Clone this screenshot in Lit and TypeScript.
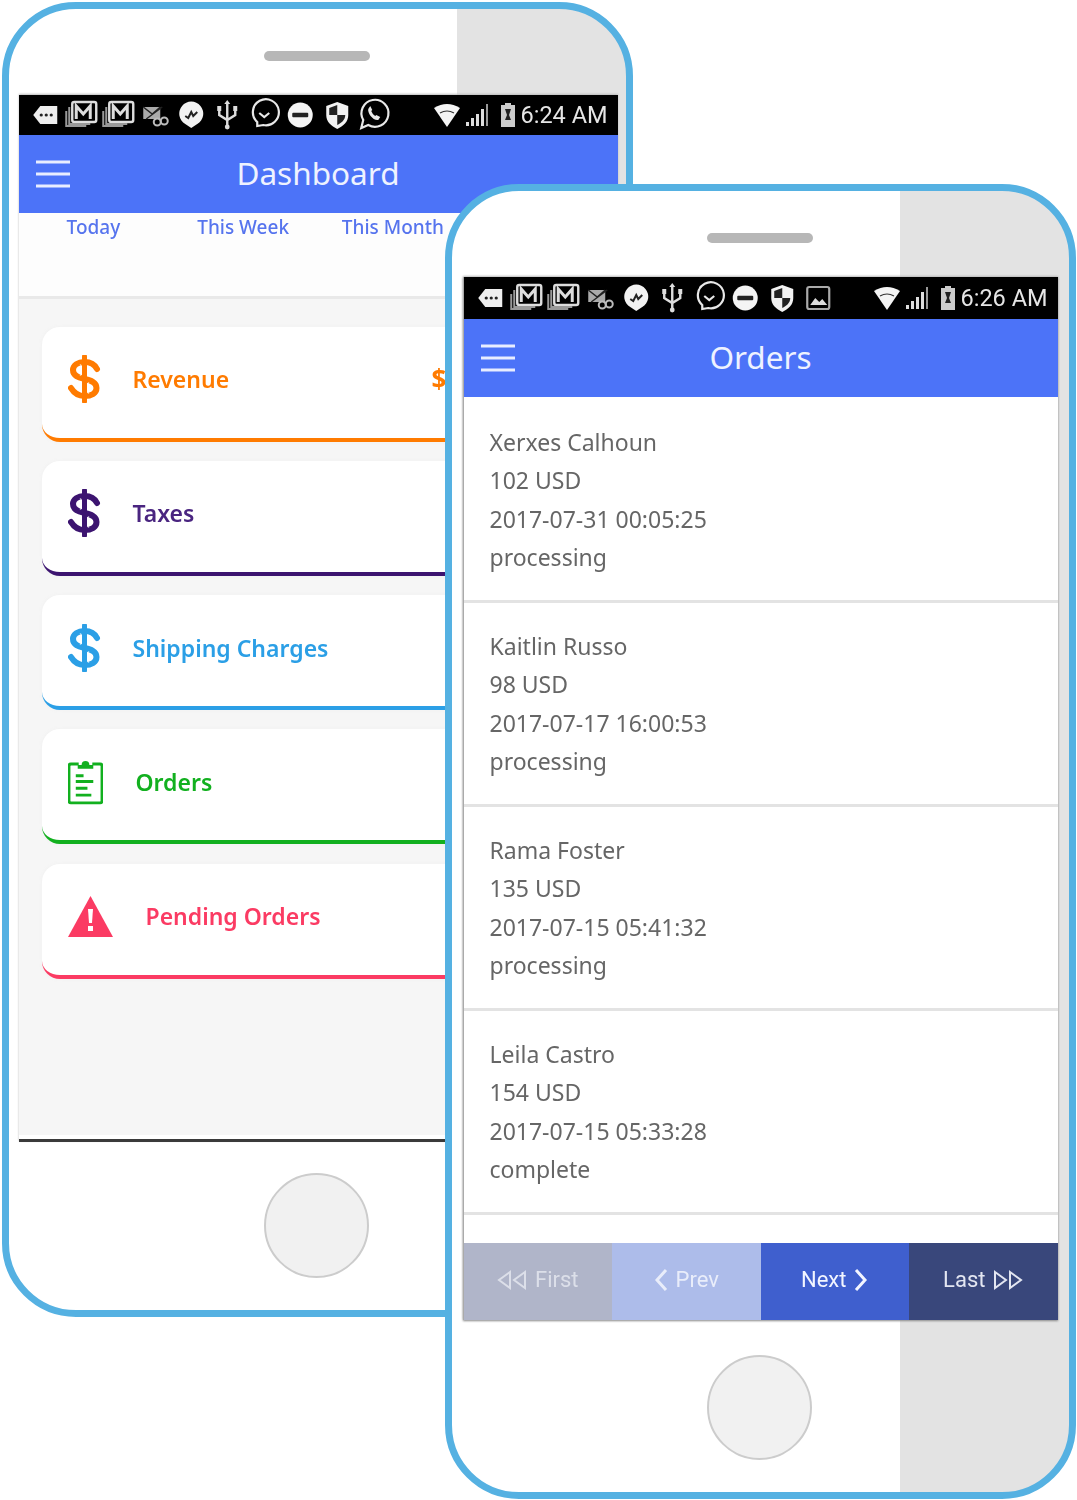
import { LitElement, html, css, svg } from 'lit';
import { customElement } from 'lit/decorators.js';

const statusIcons: Record<string, unknown> = {
  tag: svg`<path d="M6 20l7-9h17v18H13z" fill="#eee"/><circle cx="14" cy="20" r="1.6" fill="#222"/><circle cx="19" cy="20" r="1.6" fill="#222"/><circle cx="24" cy="20" r="1.6" fill="#222"/>`,
  mail: svg`<g fill="none" stroke="#ddd"><rect x="9" y="7" width="24" height="20" rx="2" stroke-width="2.4"/><path d="M13 24V11l7 8 7-8v13" stroke-width="3"/><path d="M6 12v17h21M3 16v15h20" stroke="#999" stroke-width="2"/></g>`,
  cut: svg`<path d="M7 12h17v12H7z" fill="#aaa"/><path d="M7 12l9 7 8-7M10 24l16-12" stroke="#222" stroke-width="1.4" fill="none"/><circle cx="21" cy="27" r="3.5" fill="none" stroke="#bbb" stroke-width="2"/><circle cx="28" cy="26" r="3.5" fill="none" stroke="#bbb" stroke-width="2"/>`,
  pin: svg`<path d="M18 33l-6-4a12 12 0 1 1 12 0z" fill="#f2f2f2"/><path d="M12 21l3 2 3-6 2 4 4-4" fill="none" stroke="#222" stroke-width="2"/>`,
  usb: svg`<path d="M18 7v26M10 15v5l8 5 8-5v-5" fill="none" stroke="#ddd" stroke-width="2.4"/><path d="M18 5l-3 4h6z" fill="#ddd"/><circle cx="18" cy="32" r="2.4" fill="#ddd"/><rect x="8" y="11" width="4" height="5" fill="#ddd"/><rect x="24" y="11" width="4" height="5" fill="#ddd"/>`,
  chat: svg`<path d="M11 31v-4a13 13 0 1 1 6 3z" fill="none" stroke="#e8e8e8" stroke-width="2.2"/><path d="M13 18l5 4 5-4" fill="none" stroke="#e8e8e8" stroke-width="2.2"/>`,
  minus: svg`<circle cx="18" cy="20" r="12.5" fill="#f4f4f4"/><rect x="10" y="17.8" width="16" height="4.4" rx="1" fill="#222"/>`,
  shield: svg`<path d="M18 7l11 4v9c0 7-5 11-11 14-6-3-11-7-11-14v-9z" fill="#f2f2f2"/><path d="M18 10v10h8c0 5-4 8-8 10V20h-8v-7z" fill="#222"/>`,
  whatsapp: svg`<path d="M6 33l2-8a13.500 13.500 0 1 1 5 5z" fill="none" stroke="#e8e8e8" stroke-width="2.2"/><path d="M13 14c-1 4 5 12 10 11l2-3-4-2-1 1c-2-1-3-3-4-5l1-1-2-4z" fill="#e8e8e8"/>`,
  picture: svg`<rect x="7" y="9" width="22" height="22" rx="2" fill="none" stroke="#aaa" stroke-width="2.200"/><path d="M10 27l5-7 4 4 3-3 5 6z" fill="#ddd"/>`,
};

const statusBar = (names: string[], time: string) => html`
  <div class="icons">${names.map((n) => html`<svg class="si" viewBox="0 0 36 40">${statusIcons[n]}</svg>`)}</div>
  <div class="sys">
    <svg width="26" height="24" viewBox="0 0 26 24"><path d="M0 5Q13-3 26 5L13 24z" fill="#f4f4f4"/><path d="M6 10q7-4 14 0" fill="none" stroke="#333" stroke-width="1.200"/></svg>
    <svg class="signal" width="24" height="24" viewBox="0 0 24 24"><path d="M0 19h3v4H0zM5 15h3v8H5zM10 11h3v12h-3zM15 6h3v17h-3z" fill="#ddd"/><path d="M20 1h2v22h-2z" fill="#999"/></svg>
    <svg class="batt" width="16" height="24" viewBox="0 0 16 24"><path d="M5 0h6v2h4v22H1V2h4z" fill="#ccc"/><path d="M5 6h6l-2 6 2 5H5l2-5z" fill="#222"/></svg>
    <span class="time">${time}</span>
  </div>
`;

const burger = html`<svg class="burger" width="34" height="28" viewBox="0 0 34 28"><path d="M0 2h34M0 14h34M0 26h34" stroke="#e8edff" stroke-width="3"/></svg>`;

// S curve with a stem through it, the glyph in the reference is wider than the usual font one
const dollar = html`<svg class="ic-dollar" viewBox="0 0 33 48"><path d="M29 14C26 8 21 7 16.500 7 10 7 5 10 5 15c0 6 6 7.500 11.500 9 6 1.500 12 3 12 9 0 5-5 8-12 8C10 41 6 38 3 33" fill="none" stroke="currentColor" stroke-width="6" stroke-linecap="round"/><path d="M16.500 1.500v45" stroke="currentColor" stroke-width="5" stroke-linecap="round"/><path d="M12.500 9v12M20.500 27v12" stroke="#fff" stroke-width="1.400" opacity=".5"/></svg>`;
const clipboard = html`<svg class="ic-clip" viewBox="0 0 36 48"><path d="M11 6H3a2 2 0 0 0-2 2v36a2 2 0 0 0 2 2h30a2 2 0 0 0 2-2V8a2 2 0 0 0-2-2h-8" fill="none" stroke="currentColor" stroke-width="3"/><path d="M10 11V7h4a4 4 0 0 1 8 0h4v4z" fill="currentColor"/><path d="M8 18h8M8 24h18M8 31h12M8 38h16" stroke="currentColor" stroke-width="3"/></svg>`;
const warning = html`<svg class="ic-warn" viewBox="0 0 45 41"><path d="M22.500 0L45 41H0z" fill="currentColor"/><path d="M20 13h5l-1 14h-3z" fill="#fff"/><rect x="20" y="30" width="5" height="5" fill="#fff"/></svg>`;

const cards = [
  { label: 'Revenue', color: '#ff7b00', icon: dollar, value: '$', cls: 'c-dollar' },
  { label: 'Taxes', color: '#3c1470', text: '#4a2580', icon: dollar, cls: 'c-dollar' },
  { label: 'Shipping Charges', color: '#2b9fe6', icon: dollar, cls: 'c-dollar' },
  { label: 'Orders', color: '#12b01f', icon: clipboard, cls: 'c-clip' },
  { label: 'Pending Orders', color: '#fb3b63', icon: warning, cls: 'c-warn' },
];

const orders = [
  ['Xerxes Calhoun', '102 USD', '2017-07-31 00:05:25', 'processing'],
  ['Kaitlin Russo', '98 USD', '2017-07-17 16:00:53', 'processing'],
  ['Rama Foster', '135 USD', '2017-07-15 05:41:32', 'processing'],
  ['Leila Castro', '154 USD', '2017-07-15 05:33:28', 'complete'],
];

const dbl = (flip: boolean) => html`<svg width="30" height="20" viewBox="0 0 30 20" class="${flip ? 'flip' : ''}"><path d="M13 2L2 10l11 8zM28 2L17 10l11 8z" fill="none" stroke="currentColor" stroke-width="2"/></svg>`;
const chev = (flip: boolean) => html`<svg width="14" height="24" viewBox="0 0 14 24" class="${flip ? 'flip' : ''}"><path d="M12 2L3 12l9 10" fill="none" stroke="currentColor" stroke-width="3"/></svg>`;

@customElement('app-root')
export class AppRoot extends LitElement {
  static styles = css`
    :host {
      display: block;
      width: 1077px;
      height: 1500px;
      background: #fff;
      font-family: 'Noto Sans', sans-serif;
    }
    .canvas {
      position: relative;
      width: 1077px;
      height: 1500px;
      filter: blur(0.6px);
    }
    .phone {
      position: absolute;
      box-sizing: border-box;
      width: 631px;
      height: 1315px;
      padding: 42px 11px 32px 10px;
      border: 7.5px solid #55b1e2;
      border-radius: 74px;
      background: linear-gradient(to right, #fff 448px, #e3e3e3 448px);
      display: flex;
      flex-direction: column;
      align-items: center;
    }
    .p1 { left: 1.5px; top: 1.5px; }
    .p2 { left: 444.5px; top: 183.5px; }
    .speaker {
      flex: none;
      width: 106px;
      height: 10px;
      border-radius: 5px;
      background: #b7b7b7;
      margin-bottom: 34px;
    }
    .screen {
      flex: none;
      align-self: stretch;
      display: flex;
      flex-direction: column;
      overflow: hidden;
      background: #fff;
      box-shadow: 0 -1px 2px #bbb;
    }
    .p1 .screen { height: 1047px; margin-right: -3px; }
    .p2 .screen {
      height: 1043px;
      margin-left: 1px;
      border-left: 1px solid #aaa;
      box-shadow: 0 -1px 2px #bbb, 0 1px 2px #888;
    }
    .home {
      flex: none;
      box-sizing: border-box;
      width: 105px;
      height: 105px;
      margin-top: auto;
      border-radius: 50%;
      background: #f1f1f1;
      border: 2px solid #ccc;
    }
    .status {
      flex: none;
      display: flex;
      justify-content: space-between;
      align-items: center;
      background: #000;
      padding: 0 10px 0 8px;
    }
    .p1 .status { height: 40px; }
    .p2 .status { height: 42px; }
    .icons { display: flex; }
    .si { width: 36.5px; height: 40px; display: block; }
    .sys { display: flex; align-items: center; }
    .signal { margin-left: 6px; }
    .batt { margin-left: 10px; }
    .time {
      margin-left: 5px;
      font: 23.5px Roboto, sans-serif;
      color: #e6e6e6;
      width: 87px;
      white-space: nowrap;
    }
    .bar {
      flex: none;
      box-sizing: border-box;
      position: relative;
      height: 78px;
      padding-bottom: 3px;
      display: flex;
      align-items: center;
      justify-content: center;
      background: #4c73f8;
      color: #eef2ff;
      font-size: 31.5px;
    }
    .burger { position: absolute; left: 17px; top: 25px; }
    .tabs {
      flex: none;
      height: 82px;
      display: grid;
      grid-template-columns: repeat(4, 1fr);
      justify-items: center;
      align-items: start;
      padding-top: 1px;
      background: #fdfdfd;
      border-bottom: 3px solid #e9e9e9;
      color: #5674ee;
      font-size: 19px;
      line-height: 26px;
      font-weight: 500;
    }
    .dash {
      flex: 1;
      display: flex;
      flex-direction: column;
      gap: 19.25px;
      padding: 28px 23px 0;
      background: #f6f6f6;
    }
    .card {
      box-sizing: border-box;
      height: 115px;
      display: flex;
      align-items: center;
      padding: 0 0 6px 26px;
      background: #fff;
      border-bottom: 4px solid currentColor;
      border-radius: 18px;
      box-shadow: 0 0 4px #f0f0f0;
      font-size: 23px;
      font-weight: 600;
    }
    .card-icon { display: flex; flex: none; }
    .c-dollar { width: 65px; }
    .c-clip { width: 68px; }
    .c-warn { width: 78px; }
    .ic-dollar { width: 33px; height: 48px; display: block; }
    .ic-clip { width: 35px; height: 47px; display: block; }
    .ic-warn { width: 45px; height: 41px; display: block; }
    .value { margin-left: auto; width: 163px; font-size: 26px; font-weight: 700; }
    .foot {
      flex: none;
      box-sizing: border-box;
      height: 7px;
      background: #fff;
      border-bottom: 3px solid #3a3a3a;
    }
    .list { flex: 1; overflow: hidden; padding-top: 2px; }
    .row {
      box-sizing: border-box;
      height: 204px;
      padding: 24px 26px 0;
      border-bottom: 3px solid #e3e3e3;
      color: #666;
      font-size: 23px;
      line-height: 38.6px;
    }
    .pager {
      flex: none;
      height: 77px;
      display: grid;
      grid-template-columns: repeat(4, 1fr);
      font: 22px Roboto, sans-serif;
      box-shadow: inset 0 -2px 1px rgba(0, 0, 0, 0.25);
    }
    .pager div {
      display: flex;
      align-items: center;
      justify-content: center;
      gap: 8px;
      padding-bottom: 3px;
    }
    .first { background: #b0b5c9; color: #dcdfe9; }
    .prev { background: #adbcea; color: #e9edfa; }
    .next { background: #3f5fce; color: #f2f5ff; }
    .last { background: #39477b; color: #e3e6f1; }
    .flip { transform: scaleX(-1); }
  `;

  render() {
    return html`
      <div class="canvas">
        <section class="phone p1">
          <div class="speaker"></div>
          <div class="screen">
            <div class="status">${statusBar(['tag', 'mail', 'mail', 'cut', 'pin', 'usb', 'chat', 'minus', 'shield', 'whatsapp'], '6:24 AM')}</div>
            <div class="bar">${burger}Dashboard</div>
            <div class="tabs"><span>Today</span><span>This Week</span><span>This Month</span><span>This Year</span></div>
            <div class="dash">
              ${cards.map((c) => html`
                <div class="card" style="color:${c.color}">
                  <span class="card-icon ${c.cls}">${c.icon}</span>
                  <span style="color:${c.text ?? c.color}">${c.label}</span>
                  ${c.value ? html`<span class="value">${c.value}</span>` : ''}
                </div>`)}
            </div>
            <div class="foot"></div>
          </div>
          <div class="home"></div>
        </section>

        <section class="phone p2">
          <div class="speaker"></div>
          <div class="screen">
            <div class="status">${statusBar(['tag', 'mail', 'mail', 'cut', 'pin', 'usb', 'chat', 'minus', 'shield', 'picture'], '6:26 AM')}</div>
            <div class="bar">${burger}Orders</div>
            <div class="list">
              ${orders.map((o) => html`<div class="row">${o.map((l) => html`<div>${l}</div>`)}</div>`)}
            </div>
            <div class="pager">
              <div class="first">${dbl(false)}<span>First</span></div>
              <div class="prev">${chev(false)}<span>Prev</span></div>
              <div class="next"><span>Next</span>${chev(true)}</div>
              <div class="last"><span>Last</span>${dbl(true)}</div>
            </div>
          </div>
          <div class="home"></div>
        </section>
      </div>
    `;
  }
}
